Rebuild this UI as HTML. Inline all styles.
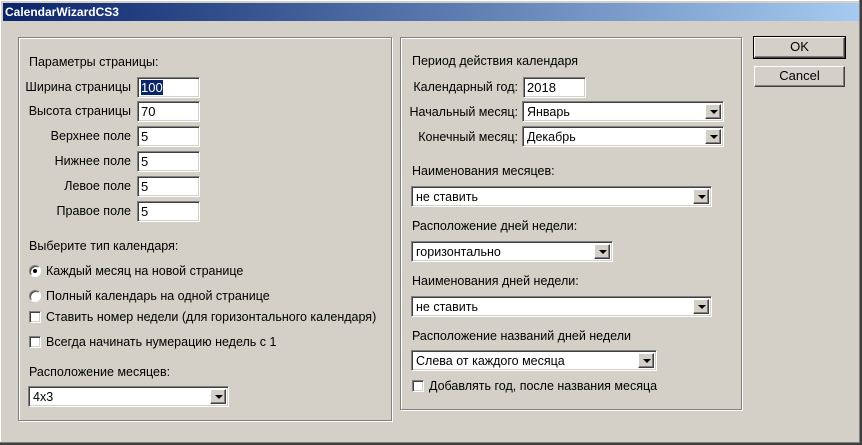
<!DOCTYPE html>
<html><head><meta charset="utf-8"><style>
*{margin:0;padding:0;box-sizing:border-box}
body{width:862px;height:445px;background:#d4d0c8;position:relative;overflow:hidden;font-family:"Liberation Sans",Tahoma,sans-serif;font-size:12.5px;color:#000}
.win{position:absolute;left:0;top:0;width:862px;height:445px;border-right:2px solid #404040;border-bottom:2px solid #404040;box-shadow:inset -1px -1px 0 #808080,inset 1px 1px 0 #fff}
.title{position:absolute;left:3px;top:3px;width:856px;height:18px;background:linear-gradient(to right,#0a246a,#a6caf0);color:#fff;font-weight:bold;font-size:12px;line-height:18px;padding-left:2px}
.grp{position:absolute;border:1px solid #808080;box-shadow:1px 1px 0 #fff,inset 1px 1px 0 #fff}
.t{position:absolute;white-space:nowrap;line-height:14px}
.r{text-align:right}
.in{position:absolute;background:#fff;height:21px;border-top:1px solid #808080;border-left:1px solid #808080;border-bottom:1px solid #fff;border-right:1px solid #fff;box-shadow:inset 1px 1px 0 #404040,inset -1px -1px 0 #d4d0c8;padding:2px 0 0 3px;line-height:15px;font-size:13px}
.sel{position:absolute;background:#fff;height:21px;border-top:1px solid #808080;border-left:1px solid #808080;border-bottom:1px solid #fff;border-right:1px solid #fff;box-shadow:inset 1px 1px 0 #404040,inset -1px -1px 0 #d4d0c8;padding:3px 0 0 4px;line-height:14px}
.sel i{position:absolute;right:2px;top:2px;width:16px;height:15px;background:#d4d0c8;border-top:1px solid #fff;border-left:1px solid #fff;border-right:1px solid #404040;border-bottom:1px solid #404040;box-shadow:inset -1px -1px 0 #808080}
.sel i:after{content:"";position:absolute;left:4px;top:5px;border-left:4px solid transparent;border-right:4px solid transparent;border-top:4px solid #000}
.cb{position:absolute;width:12px;height:12px;background:#fff;border-top:1px solid #808080;border-left:1px solid #808080;border-right:1px solid #fff;border-bottom:1px solid #fff;box-shadow:inset 1px 1px 0 #404040,inset -1px -1px 0 #d4d0c8}
.rd{position:absolute;width:12px;height:12px;border-radius:50%;background:#fff;border:1px solid;border-color:#808080 #fff #fff #808080;box-shadow:inset 1px 1px 0 #404040}
.rd.on:after{content:"";position:absolute;left:3px;top:3px;width:4px;height:4px;border-radius:50%;background:#000}
.btn{position:absolute;left:754px;width:91px;height:21px;background:#d4d0c8;border-top:1px solid #fff;border-left:1px solid #fff;border-right:1px solid #404040;border-bottom:1px solid #404040;box-shadow:inset -1px -1px 0 #808080;text-align:center;line-height:18px;font-size:13px}
.btn.def{outline:1px solid #000}
</style></head><body>
<div class="win"></div>
<div class="title">CalendarWizardCS3</div>

<div class="grp" style="left:18px;top:37px;width:374px;height:384px"></div>
<div class="grp" style="left:400px;top:37px;width:342px;height:373px"></div>

<div class="btn def" style="top:37px">OK</div>
<div class="btn" style="top:66px">Cancel</div>

<div class="t" style="left:29px;top:55px">Параметры страницы:</div>
<div class="t r" style="left:0;width:131px;top:80px">Ширина страницы</div>
<div class="in" style="left:137px;top:77px;width:63px"><span style="background:#0a246a;color:#fff">100</span></div>
<div class="t r" style="left:0;width:131px;top:104px">Высота страницы</div>
<div class="in" style="left:137px;top:101px;width:63px">70</div>
<div class="t r" style="left:0;width:131px;top:129px">Верхнее поле</div>
<div class="in" style="left:137px;top:126px;width:63px">5</div>
<div class="t r" style="left:0;width:131px;top:154px">Нижнее поле</div>
<div class="in" style="left:137px;top:151px;width:63px">5</div>
<div class="t r" style="left:0;width:131px;top:179px">Левое поле</div>
<div class="in" style="left:137px;top:176px;width:63px">5</div>
<div class="t r" style="left:0;width:131px;top:204px">Правое поле</div>
<div class="in" style="left:137px;top:201px;width:63px">5</div>

<div class="t" style="left:29px;top:239px">Выберите тип календаря:</div>
<div class="rd on" style="left:29px;top:265px"></div>
<div class="t" style="left:46px;top:264px">Каждый месяц на новой странице</div>
<div class="rd" style="left:29px;top:290px"></div>
<div class="t" style="left:46px;top:289px">Полный календарь на одной странице</div>
<div class="cb" style="left:29px;top:311px"></div>
<div class="t" style="left:46px;top:310px">Ставить номер недели (для горизонтального календаря)</div>
<div class="cb" style="left:29px;top:336px"></div>
<div class="t" style="left:46px;top:335px">Всегда начинать нумерацию недель с 1</div>
<div class="t" style="left:29px;top:365px">Расположение месяцев:</div>
<div class="sel" style="left:28px;top:386px;width:201px">4x3<i></i></div>

<div class="t" style="left:412px;top:54px">Период действия календаря</div>
<div class="t r" style="left:380px;width:138px;top:80px">Календарный год:</div>
<div class="in" style="left:523px;top:77px;width:63px">2018</div>
<div class="t r" style="left:380px;width:138px;top:105px">Начальный месяц:</div>
<div class="sel" style="left:522px;top:101px;width:202px">Январь<i></i></div>
<div class="t r" style="left:380px;width:138px;top:130px">Конечный месяц:</div>
<div class="sel" style="left:522px;top:126px;width:202px">Декабрь<i></i></div>

<div class="t" style="left:412px;top:164px">Наименования месяцев:</div>
<div class="sel" style="left:411px;top:186px;width:301px">не ставить<i></i></div>
<div class="t" style="left:412px;top:219px">Расположение дней недели:</div>
<div class="sel" style="left:411px;top:241px;width:202px">горизонтально<i></i></div>
<div class="t" style="left:412px;top:274px">Наименования дней недели:</div>
<div class="sel" style="left:411px;top:296px;width:301px">не ставить<i></i></div>
<div class="t" style="left:412px;top:329px">Расположение названий дней недели</div>
<div class="sel" style="left:411px;top:350px;width:246px">Слева от каждого месяца<i></i></div>
<div class="cb" style="left:412px;top:380px"></div>
<div class="t" style="left:429px;top:379px">Добавлять год, после названия месяца</div>
</body></html>
